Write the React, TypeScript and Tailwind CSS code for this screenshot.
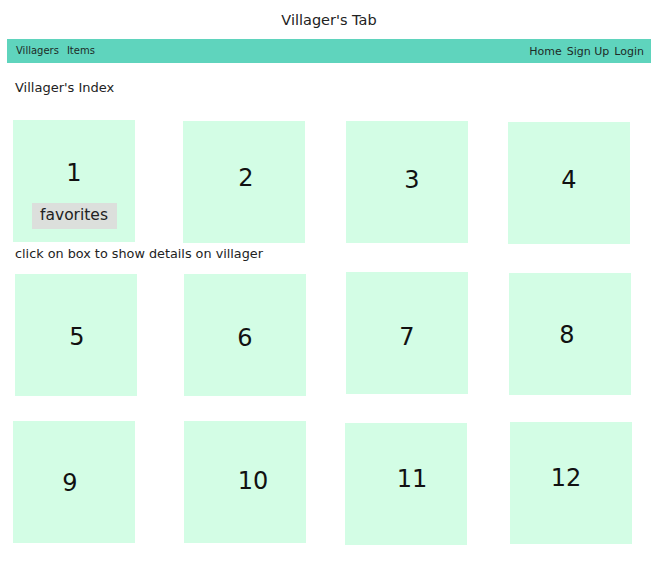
import React from "react";

const font = "font-['DejaVu_Sans','Verdana',sans-serif]";

function Box({ n, cls, fav }: { n: number; cls: string; fav?: boolean }) {
  if (fav) {
    return (
      <div className={`w-[122px] h-[122px] bg-[#d3fde5] flex flex-col items-center pt-[39px] ${cls}`}>
        <div className="text-[24px] leading-[28px] text-[#111]">{n}</div>
        <div className="mt-[16px] w-[85px] h-[26px] bg-[#dcdfdc] flex items-center justify-center text-[15.5px] text-[#222]">
          favorites
        </div>
      </div>
    );
  }
  return (
    <div className={`w-[122px] h-[122px] bg-[#d3fde5] flex items-center justify-center text-[24px] text-[#111] ${cls}`}>
      {n}
    </div>
  );
}

export default function App() {
  return (
    <div className={`w-[658px] h-[575px] bg-white text-[#222] ${font}`}>
      <h1 className="pt-[12px] text-center text-[14.5px] leading-[16px]">Villager's Tab</h1>
      <nav className="mx-[7px] mt-[11px] h-[24px] bg-[#5fd4bd] flex justify-between pl-[9px] pr-[7px] text-[#1d2b27]">
        <div className="flex gap-[8px] pt-[5px] text-[10px] leading-[14px]">
          <span>Villagers</span>
          <span>Items</span>
        </div>
        <div className="flex gap-[5px] pt-[6px] text-[11px] leading-[14px]">
          <span>Home</span>
          <span>Sign Up</span>
          <span>Login</span>
        </div>
      </nav>
      <h2 className="ml-[15px] mt-[17px] text-[13px] leading-[16px]">Villager's Index</h2>

      <div className="mt-[24px] flex items-start">
        <Box n={1} fav cls="ml-[13px]" />
        <Box n={2} cls="ml-[48px] mt-[1px] pl-[4px] pb-[8px]" />
        <Box n={3} cls="ml-[41px] mt-[1px] pl-[10px] pb-[4px]" />
        <Box n={4} cls="ml-[40px] mt-[2px] pb-[6px]" />
      </div>

      <p className="ml-[15px] mt-[2px] text-[12.8px] leading-[16px]">click on box to show details on villager</p>

      <div className="mt-[10px] flex items-start">
        <Box n={5} cls="ml-[15px] mt-[2px] pl-[2px] pt-[4px]" />
        <Box n={6} cls="ml-[47px] mt-[2px] pt-[6px]" />
        <Box n={7} cls="ml-[40px] pt-[8px]" />
        <Box n={8} cls="ml-[41px] mt-[1px] pr-[6px] pt-[2px]" />
      </div>

      <div className="mt-[25px] flex items-start">
        <Box n={9} cls="ml-[13px] pr-[8px] pt-[2px]" />
        <Box n={10} cls="ml-[49px] pl-[16px] pb-[2px]" />
        <Box n={11} cls="ml-[39px] mt-[2px] pl-[12px] pb-[10px]" />
        <Box n={12} cls="ml-[43px] mt-[1px] pr-[10px] pb-[10px]" />
      </div>
    </div>
  );
}
